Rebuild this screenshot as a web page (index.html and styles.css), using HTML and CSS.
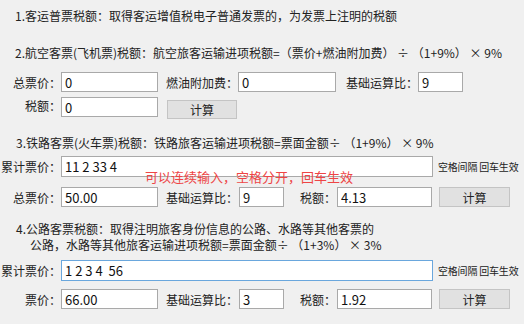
FILE: index.html
```html
<!DOCTYPE html>
<html lang="zh-CN">
<head>
  <meta charset="UTF-8">
  <meta name="viewport" content="width=device-width, initial-scale=1.0">
  <title>进项税额计算</title>
  <link rel="stylesheet" href="styles.css">
</head>
<body>
  <div class="app">
    <p class="title t1">1.客运普票税额：取得客运增值税电子普通发票的，为发票上注明的税额</p>

    <p class="title t2">2.航空客票(飞机票)税额：航空旅客运输进项税额=（票价+燃油附加费） ÷ （1+9%） × 9%</p>
    <div class="row r1">
      <label class="lbl">总票价：</label>
      <input class="field w97" value="0">
      <label class="lbl l-fuel">燃油附加费：</label>
      <input class="field w98" value="0">
      <label class="lbl l-ratio">基础运算比：</label>
      <input class="field w45" value="9">
    </div>
    <div class="row r2">
      <label class="lbl">税额：</label>
      <input class="field w97" value="0">
      <button class="btn btn-air">计算</button>
    </div>

    <p class="title t3">3.铁路客票(火车票)税额：铁路旅客运输进项税额=票面金额÷ （1+9%） × 9%</p>
    <div class="row r3">
      <label class="lbl">累计票价：</label>
      <input class="field wide" value="11 2 33 4">
      <span class="tip">空格间隔 回车生效</span>
      <span class="hint">可以连续输入，空格分开，回车生效</span>
    </div>
    <div class="row r4">
      <label class="lbl">总票价：</label>
      <input class="field w97" value="50.00">
      <label class="lbl l-ratio2">基础运算比：</label>
      <input class="field w45" value="9">
      <label class="lbl l-tax">税额：</label>
      <input class="field w95" value="4.13">
      <button class="btn btn-calc">计算</button>
    </div>

    <div class="t4">
      <p class="t4-line">4.公路客票税额：取得注明旅客身份信息的公路、水路等其他客票的</p>
      <p class="t4-line indent">公路，水路等其他旅客运输进项税额=票面金额÷ （1+3%） × 3%</p>
    </div>
    <div class="row r5">
      <label class="lbl">累计票价：</label>
      <input class="field wide focus" value="1 2 3 4  56">
      <span class="tip">空格间隔 回车生效</span>
    </div>
    <div class="row r6">
      <label class="lbl">票价：</label>
      <input class="field w97" value="66.00">
      <label class="lbl l-ratio2">基础运算比：</label>
      <input class="field w45" value="3">
      <label class="lbl l-tax">税额：</label>
      <input class="field w95" value="1.92">
      <button class="btn btn-calc">计算</button>
    </div>
  </div>
</body>
</html>
```

FILE: styles.css
```css
body {
  margin: 0;
  background: #f0f0f0;
  color: #222;
  font-family: "Noto Sans CJK SC", "Microsoft YaHei", sans-serif;
  font-size: 12px;
}
.app {
  padding-top: 8px;
}
.title {
  margin: 0;
  line-height: 16px;
  white-space: pre;
}
.t1 {
  padding-left: 15px;
}
.t2 {
  margin-top: 21px;
  padding-left: 15px;
}
.t3 {
  margin-top: 16px;
  padding-left: 16px;
}
.t4 {
  margin-top: 14px;
  padding-left: 16px;
}
.t4-line {
  margin: 0;
  height: 16px;
  line-height: 16px;
  white-space: pre;
}
.indent {
  padding-left: 14px;
}
.row {
  display: flex;
  align-items: center;
}
.r1 {
  margin-top: 11px;
}
.r2 {
  margin-top: 5px;
  align-items: flex-start;
}
.r3 {
  margin-top: 5px;
  position: relative;
}
.r4 {
  margin-top: 10px;
}
.r5 {
  margin-top: 7px;
}
.r6 {
  margin-top: 8px;
}
.lbl {
  flex: none;
  width: 61px;
  text-align: right;
  white-space: nowrap;
}
.l-fuel {
  width: 72px;
  margin-left: 8px;
  text-align: left;
}
.l-ratio {
  width: 72px;
  margin-left: 10px;
  text-align: left;
}
.l-ratio2 {
  width: 73px;
  margin-left: 8px;
  text-align: left;
}
.l-tax {
  width: 37px;
  margin-left: 16px;
  text-align: left;
}
.field {
  box-sizing: border-box;
  height: 20px;
  margin: 0;
  padding: 0 3px;
  border: 1px solid #a9a9a9;
  background: #fff;
  color: #111;
  font-family: "Noto Sans CJK SC", "Microsoft YaHei", sans-serif;
  font-size: 13px;
  outline: none;
}
.w97 { width: 97px; }
.w98 { width: 98px; }
.w95 { width: 95px; }
.w45 { width: 45px; }
.wide {
  width: 372px;
  height: 21px;
}
.focus {
  border-color: #6aa7dd;
}
.tip {
  margin-left: 5px;
  font-size: 10px;
  letter-spacing: -0.2px;
  white-space: nowrap;
}
.hint {
  position: absolute;
  left: 145px;
  top: 11px;
  color: #ee4545;
  font-size: 13px;
  white-space: nowrap;
}
.btn {
  box-sizing: border-box;
  height: 19px;
  padding: 0;
  border: 1px solid #c4c4c4;
  background: #e1e1e1;
  color: #222;
  font-family: "Noto Sans CJK SC", "Microsoft YaHei", sans-serif;
  font-size: 12px;
  line-height: 17px;
}
.btn-air {
  width: 70px;
  margin-top: 3px;
  margin-left: 9px;
}
.btn-calc {
  width: 71px;
  height: 20px;
  margin-left: 7px;
}
```
